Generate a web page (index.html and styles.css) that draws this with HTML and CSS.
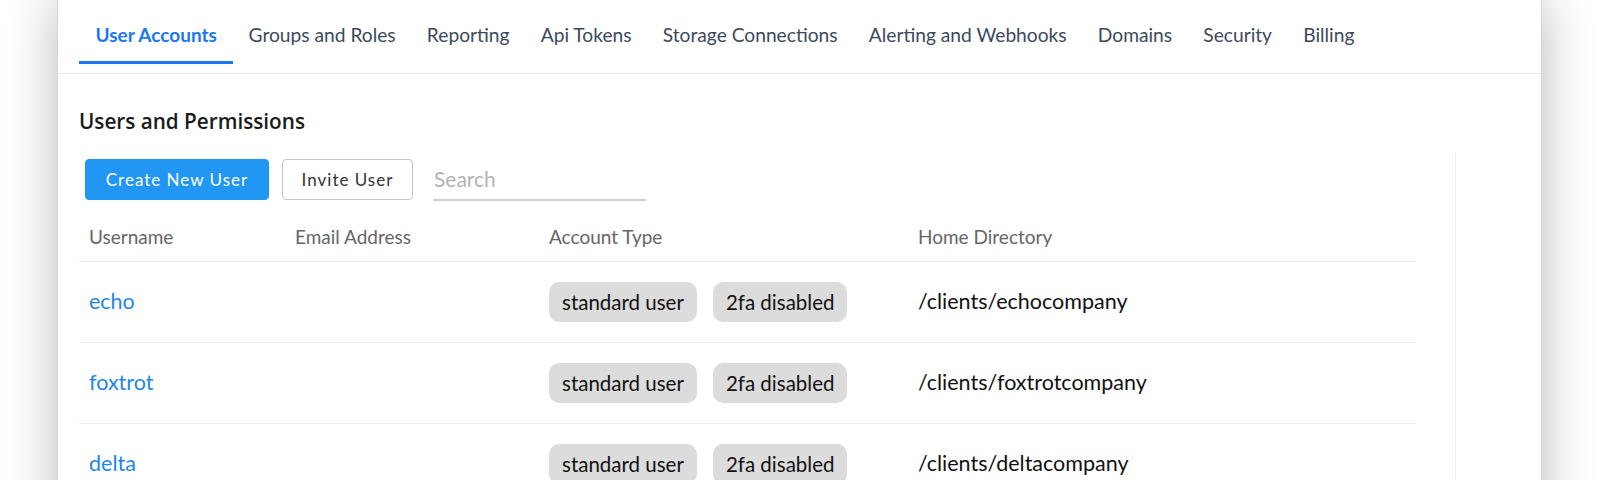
FILE: index.html
```html
<!DOCTYPE html>
<html lang="en">
<head>
<meta charset="utf-8">
<title>Users and Permissions</title>
<link rel="stylesheet" href="styles.css">
</head>
<body>
<div class="panel">
  <nav class="tabs">
    <a class="tab active">User Accounts</a>
    <a class="tab">Groups and Roles</a>
    <a class="tab">Reporting</a>
    <a class="tab">Api Tokens</a>
    <a class="tab">Storage Connections</a>
    <a class="tab">Alerting and Webhooks</a>
    <a class="tab">Domains</a>
    <a class="tab">Security</a>
    <a class="tab">Billing</a>
  </nav>
  <section class="content">
    <h2 class="title">Users and Permissions</h2>
    <div class="pane">
      <div class="toolbar">
        <button class="btn btn-primary">Create New User</button>
        <button class="btn btn-outline">Invite User</button>
        <input class="search" type="text" placeholder="Search">
      </div>
      <div class="table">
        <div class="row head">
          <div class="cell">Username</div>
          <div class="cell">Email Address</div>
          <div class="cell">Account Type</div>
          <div class="cell">Home Directory</div>
        </div>
        <div class="row">
          <div class="cell"><a class="user">echo</a></div>
          <div class="cell"></div>
          <div class="cell badges"><span class="badge">standard user</span><span class="badge">2fa disabled</span></div>
          <div class="cell dir">/clients/echocompany</div>
        </div>
        <div class="row">
          <div class="cell"><a class="user">foxtrot</a></div>
          <div class="cell"></div>
          <div class="cell badges"><span class="badge">standard user</span><span class="badge">2fa disabled</span></div>
          <div class="cell dir">/clients/foxtrotcompany</div>
        </div>
        <div class="row">
          <div class="cell"><a class="user">delta</a></div>
          <div class="cell"></div>
          <div class="cell badges"><span class="badge">standard user</span><span class="badge">2fa disabled</span></div>
          <div class="cell dir">/clients/deltacompany</div>
        </div>
      </div>
    </div>
  </section>
</div>
</body>
</html>
```
FILE: styles.css
```css
html, body {
  margin: 0;
  padding: 0;
  height: 100%;
  overflow: hidden;
  background: #ffffff;
}

body {
  font-family: "Lato", "Liberation Sans", sans-serif;
  color: #111;
}

.panel {
  margin-left: 57px;
  width: 1483px;
  min-height: 600px;
  background: #fff;
  border-left: 1px solid #d6d6d6;
  border-right: 1px solid #d6d6d6;
  box-shadow: 0 0 48px rgba(0, 0, 0, 0.28);
}

.tabs {
  display: flex;
  align-items: flex-start;
  height: 73px;
  padding-left: 21px;
  border-bottom: 1px solid #e6e6e6;
}

.tab {
  box-sizing: border-box;
  height: 64px;
  padding: 8px 15.6px 0;
  display: flex;
  align-items: center;
  font-size: 19.2px;
  color: #3a4a5c;
  border-bottom: 3px solid transparent;
  cursor: pointer;
}

.tab.active {
  padding: 8px 16px 0 16.5px;
  color: #1a78f2;
  font-weight: 700;
  font-size: 19px;
  border-bottom-color: #1a78f2;
}

.content {
  padding: 0 85px 0 21px;
}

.title {
  margin: 35px 0 17px;
  font-family: "Open Sans", "Noto Sans", sans-serif;
  font-weight: 600;
  font-size: 20.7px;
  line-height: 1.2;
  color: #1a1a1a;
}

.pane {
  border-right: 1px solid #f2f2f2;
  padding-top: 8px;
  min-height: 400px;
}

.toolbar {
  display: flex;
  align-items: stretch;
  gap: 14px;
  padding-left: 6px;
  height: 41px;
}

.btn {
  box-sizing: border-box;
  height: 41px;
  border-radius: 4px;
  font-family: "Lato", sans-serif;
  font-size: 17px;
  letter-spacing: 1px;
  cursor: pointer;
}

.btn-primary {
  width: 184px;
  background: #2196f3;
  color: #fff;
  border: 1px solid #2196f3;
}

.btn-outline {
  width: 131px;
  margin-left: -1px;
  background: #fff;
  color: #333;
  border: 1px solid #c6c6c6;
}

.search {
  box-sizing: border-box;
  width: 213px;
  height: 42px;
  margin-left: 6px;
  padding: 0 1px;
  border: none;
  border-bottom: 2px solid #cfcfcf;
  outline: none;
  font-family: "Lato", sans-serif;
  font-size: 21px;
  color: #333;
  background: transparent;
}

.search::placeholder {
  color: #b3b3b3;
}

.table {
  width: 1337px;
}

.row {
  display: grid;
  grid-template-columns: 206px 254px 369px 1fr;
  align-items: center;
  height: 81px;
  box-sizing: border-box;
  border-bottom: 1px solid #efefef;
}

.row.head {
  height: 62px;
  align-items: end;
  padding-bottom: 12px;
  border-bottom: 1px solid #ececec;
}

.head .cell {
  font-size: 19px;
  line-height: 1.2;
  color: #666;
}

.cell {
  padding-left: 10px;
  font-size: 21.5px;
  line-height: 1.2;
}

.user {
  color: #1d87e6;
  cursor: pointer;
}

.badges {
  display: flex;
  gap: 16px;
}

.badge {
  box-sizing: border-box;
  height: 40px;
  padding: 0 13px;
  display: inline-flex;
  align-items: center;
  border-radius: 10px;
  background: #dcdcdc;
  color: #111;
  font-size: 20.5px;
}

.dir {
  color: #111;
}
```
